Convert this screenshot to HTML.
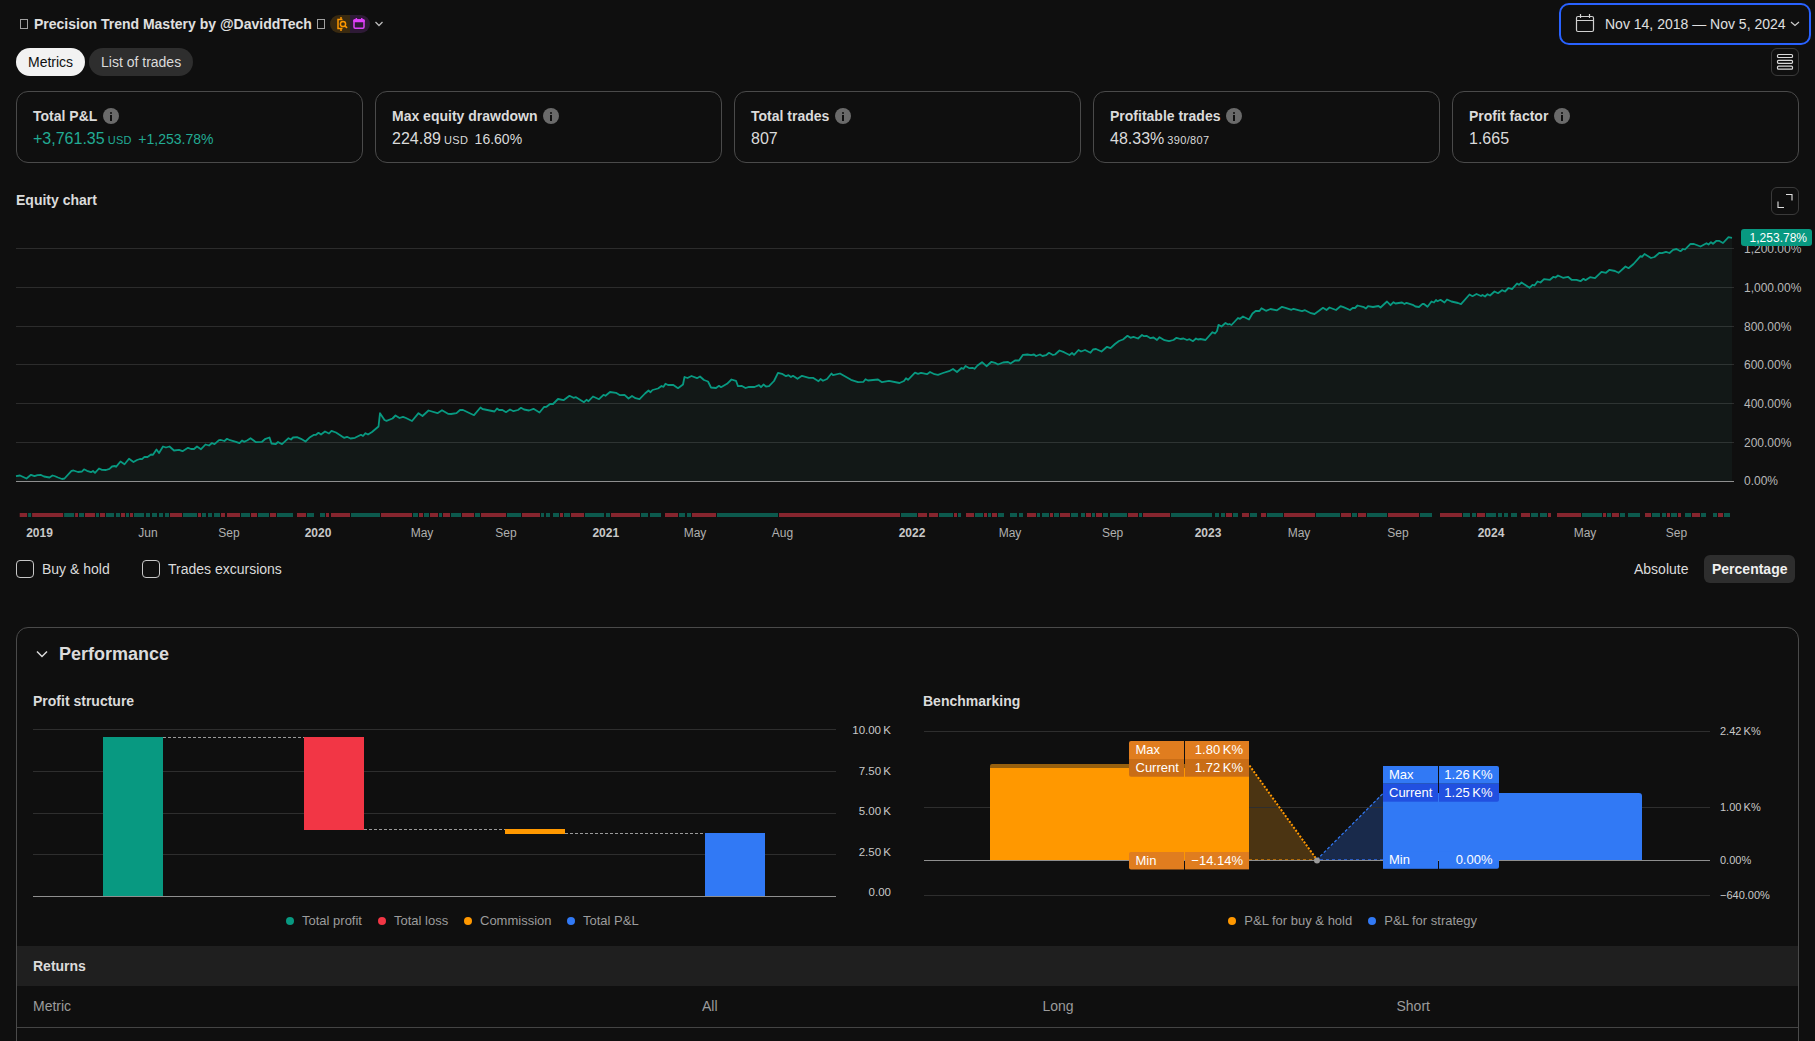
<!DOCTYPE html>
<html><head><meta charset="utf-8">
<style>
*{box-sizing:border-box;margin:0;padding:0}
html,body{width:1815px;height:1041px;overflow:hidden;background:#0f0f0f;font-family:"Liberation Sans",sans-serif;color:#dbdbdb}
.a{position:absolute;white-space:nowrap}
.b{font-weight:bold}
.card{position:absolute;top:91px;width:347px;height:72px;border:1px solid #4a4a4a;border-radius:12px}
.card .t{position:absolute;left:16px;top:15px;font-size:14px;font-weight:bold;line-height:18px}
.card .v{position:absolute;left:16px;top:37px;font-size:16px;line-height:20px}
.info{display:inline-block;width:16px;height:16px;border-radius:50%;background:#6a6a6a;vertical-align:-3px;margin-left:6px;position:relative}
.info:before{content:"";position:absolute;left:7px;top:3.5px;width:2px;height:2px;background:#0f0f0f;border-radius:1px}
.info:after{content:"";position:absolute;left:7px;top:6.5px;width:2px;height:6px;background:#0f0f0f}
.usd{font-size:11px;margin-left:3px;letter-spacing:0.35px}
.pct{font-size:14px;margin-left:6.4px}
.small{font-size:11px;margin-left:3px;letter-spacing:0.35px}
.pill{position:absolute;top:48px;height:28px;border-radius:14px;font-size:14px;line-height:28px;padding:0 12px}
.cb{position:absolute;width:18px;height:18px;border:1.5px solid #c8c8c8;border-radius:4px;top:560px}
.lg{font-size:13px;fill:#9c9c9c}
</style></head><body>
<div class="a" style="left:0;top:0;width:1815px;height:1041px">

<!-- header -->
<div class="a" style="left:20px;top:19px;width:8px;height:10px;border:1px solid #a0a0a0"></div>
<div class="a b" id="title" style="left:34px;top:15px;font-size:14px;line-height:18px;color:#e0e0e0">Precision Trend Mastery by @DaviddTech</div>
<div class="a" style="left:317px;top:19px;width:8px;height:10px;border:1px solid #a0a0a0"></div>
<div class="a" style="left:330px;top:15px;width:40px;height:18px;border-radius:9px;overflow:hidden">
  <div class="a" style="left:0;top:0;width:20px;height:18px;background:#3a2a10"></div>
  <div class="a" style="left:20px;top:0;width:20px;height:18px;background:#2e1a36"></div>
  <svg class="a" style="left:0;top:0" width="40" height="18" viewBox="0 0 40 18">
    <path d="M11 2v2.5M11 13.5v2.5" stroke="#ff9800" stroke-width="1.5"/>
    <path d="M12.5 4.5H8v9h4.5" stroke="#ff9800" stroke-width="1.5" fill="none"/>
    <circle cx="13" cy="9" r="2.6" stroke="#ff9800" stroke-width="1.5" fill="#3a2a10"/>
    <path d="M14.9 10.9l2.2 2" stroke="#ff9800" stroke-width="1.5"/>
    <rect x="24" y="5" width="10" height="8.2" rx="1.2" stroke="#e040fb" stroke-width="1.5" fill="none"/>
    <rect x="23.3" y="4.3" width="11.4" height="3" rx="1" fill="#e040fb"/>
    <rect x="25.6" y="3" width="1.5" height="2" fill="#e040fb"/><rect x="31" y="3" width="1.5" height="2" fill="#e040fb"/>
  </svg>
</div>
<svg class="a" style="left:374px;top:20px" width="10" height="8" viewBox="0 0 10 8"><path d="M1.5 2l3.5 3.5L8.5 2" stroke="#bbb" stroke-width="1.3" fill="none"/></svg>

<!-- date range -->
<div class="a" style="left:1559px;top:3px;width:252px;height:42px;border:2px solid #2962ff;border-radius:10px"></div>
<svg class="a" style="left:1575px;top:13px" width="20" height="20" viewBox="0 0 20 20">
  <rect x="1.5" y="3.5" width="17" height="15" rx="1.5" stroke="#d0d0d0" stroke-width="1.2" fill="none"/>
  <path d="M1.5 7.5h17M5.5 1v4M14.5 1v4" stroke="#d0d0d0" stroke-width="1.2"/>
</svg>
<div class="a" id="date" style="left:1605px;top:15px;font-size:14px;line-height:18px;color:#e0e0e0">Nov 14, 2018 — Nov 5, 2024</div>
<svg class="a" style="left:1789px;top:19px" width="12" height="10" viewBox="0 0 12 10"><path d="M2 3l4 3.5L10 3" stroke="#ccc" stroke-width="1.2" fill="none"/></svg>

<!-- tabs -->
<div class="pill" id="tab1" style="left:16px;background:#f2f2f2;color:#0f0f0f">Metrics</div>
<div class="pill" id="tab2" style="left:89px;background:#2e2e2e;color:#dbdbdb">List of trades</div>

<!-- menu btn -->
<div class="a" style="left:1771px;top:48px;width:28px;height:28px;border:1px solid #3a3a3a;border-radius:6px"></div>
<svg class="a" style="left:1771px;top:48px" width="28" height="28" viewBox="0 0 28 28">
  <rect x="6.5" y="6.5" width="15" height="3" rx="1" stroke="#d8d8d8" stroke-width="1.2" fill="none"/>
  <rect x="6.5" y="12.3" width="15" height="3" rx="1" stroke="#d8d8d8" stroke-width="1.2" fill="none"/>
  <rect x="6.5" y="18.2" width="15" height="3" rx="1" stroke="#d8d8d8" stroke-width="1.2" fill="none"/>
</svg>

<!-- cards -->
<div class="card" style="left:16px"><div class="t">Total P&amp;L<span class="info"></span></div>
 <div class="v" style="color:#22ab94">+3,761.35<span class="usd">USD</span><span class="pct">+1,253.78%</span></div></div>
<div class="card" style="left:375px"><div class="t">Max equity drawdown<span class="info"></span></div>
 <div class="v">224.89<span class="usd">USD</span><span class="pct">16.60%</span></div></div>
<div class="card" style="left:734px"><div class="t">Total trades<span class="info"></span></div>
 <div class="v">807</div></div>
<div class="card" style="left:1093px"><div class="t">Profitable trades<span class="info"></span></div>
 <div class="v">48.33%<span class="small">390/807</span></div></div>
<div class="card" style="left:1452px"><div class="t">Profit factor<span class="info"></span></div>
 <div class="v">1.665</div></div>

<!-- equity chart -->
<div class="a b" style="left:16px;top:191px;font-size:14px;line-height:18px">Equity chart</div>
<div class="a" style="left:1771px;top:187px;width:28px;height:28px;border:1px solid #3a3a3a;border-radius:6px"></div>
<svg class="a" style="left:1771px;top:187px" width="28" height="28" viewBox="0 0 28 28">
  <path d="M15 7.5h6v6M13 20.5H7v-6" stroke="#e0e0e0" stroke-width="1.1" fill="none"/>
</svg>

<svg class="a" style="left:0;top:0" width="1815" height="560" viewBox="0 0 1815 560">
  <path d="M16 476.2 L20 475.5 L26.5 478.5 L31 474.8 L34.5 476.2 L37.5 475.2 L41 475 L44 476.5 L49.5 477.5 L52.5 475.5 L54.5 476 L58 477.5 L62 479 L64.5 478.5 L71.5 470.8 L73.5 470.5 L78 472 L82 471.5 L84 469.3 L87 470.8 L91 472.2 L93 471 L95 472.8 L99 468.5 L102 469.8 L106 470 L109.5 468.8 L112 466.5 L115 466 L116 466.8 L120.5 461.5 L124.5 464.2 L129 458.7 L133.5 462 L137 460 L140 459 L142 459.2 L144.5 456.8 L147.5 457 L151 454.5 L153 454.8 L156.5 449.5 L159 453 L163 446.5 L166 447.5 L169.5 446.5 L174 450.5 L179 449.8 L182.5 451.2 L188 447.8 L191 449 L194 449 L197 446.5 L201 449.2 L205.5 444.5 L209 445.5 L212 443 L214.5 444.2 L219 440.2 L221 440 L224.5 441 L227 438.8 L230 440.2 L236 441.8 L239.5 443.2 L242 440.5 L244 441.8 L247 440.5 L250.5 438.2 L256 442.2 L262 441.8 L265.5 438.8 L269.5 437.5 L271.5 443.5 L275.5 444.2 L278 442 L282 444.2 L288.5 438.2 L291 439.5 L293 437.5 L297 437.2 L301 438.8 L305.5 441.5 L310 437.2 L314 434.8 L316 434.8 L318.5 432.8 L321 434.5 L325 431.5 L329 433.5 L331.5 430.8 L336 432.5 L344 437.8 L347 436.8 L350.5 438.5 L355 437.8 L361 434.8 L363 436 L365.5 433.2 L368 434.5 L372 432 L378.5 426.5 L380 413.2 L384.5 420 L386.5 420.8 L392.5 418.5 L395.5 415.5 L399.5 418 L403 416.8 L406 418 L412 421 L418.5 413.2 L422.5 416 L428.5 410.5 L437.5 413.2 L442 410.2 L448 413.8 L451 414 L456.5 413.2 L460 410 L463 410 L474 415.2 L480.5 407.5 L482.5 409 L494.5 411.5 L497 408.5 L499 410 L502 409.8 L506 412.2 L510 409.5 L513.5 411.2 L518 410 L521 407.8 L524 409.5 L529 410.5 L533.5 408.8 L539.5 412.5 L544 407 L546.5 406.8 L550 404 L553 404 L558 399 L563.5 400.2 L569.5 395.8 L573.5 397.8 L576 397.2 L584 402.2 L586.5 399.8 L588.5 401.2 L593 396.5 L599 399.2 L603.5 394.8 L605.5 395.8 L610 392 L616 392.8 L620 395.2 L624.5 394.8 L628.5 398.5 L632 396 L635.5 398.2 L639.5 399.2 L645 393.5 L648.5 390.5 L650.5 392.2 L652.5 390 L658 388.5 L661.5 386 L663.5 386.8 L665.5 383.8 L668 385 L673 384.8 L678 388.2 L683 384.5 L684.5 377 L687.5 378 L691.5 376 L697 378.2 L700 376.5 L704 380 L708 381.5 L711 387.5 L716 388 L719 385.8 L721 387.2 L727 383.8 L731.5 379.5 L736 380.8 L738 386.2 L741.5 385.8 L745.5 388 L749 386.8 L754.5 387 L759 385.2 L761 387.2 L763.5 384.5 L766 386.5 L769 386.2 L774 381 L778 372.8 L782 373.8 L786 376.2 L788.5 375.2 L791 377 L793 375.8 L797.5 378.8 L802 375.8 L809 377.8 L813 377.8 L818.5 381.2 L820.5 379 L823 380.8 L827 379 L831.5 373.5 L833 375.2 L840 373.5 L851 379.8 L858 382.2 L863.5 381.8 L865.5 379.2 L868 380.5 L878 379.5 L882 382.2 L889 380.8 L899.5 383 L904 381 L906 378.2 L908 379.8 L915 372.7 L918 373.8 L921 372.8 L927 374.2 L930 372 L934.5 374.2 L938 374.8 L943 373 L949 371.2 L953 369 L957 372 L961.5 368 L963.5 368.8 L965.5 366 L969.5 368.2 L972.5 367.8 L974.5 368.8 L977.5 365.5 L982 362.2 L986.5 366.2 L991.5 361.8 L995 362.8 L998 364.5 L1003 362.5 L1008 362 L1010.5 363.5 L1015 360.5 L1019 360.5 L1023 354.8 L1027.5 354.5 L1031 355.2 L1034 354.5 L1036 356 L1040 354.5 L1042.5 356 L1046 355.2 L1049 352.8 L1053 355 L1055 354.5 L1059.5 350.5 L1064 352.2 L1069.5 355 L1072 353 L1074 354.8 L1078.5 350 L1081 351.5 L1085 350 L1090.5 352.8 L1093 349.5 L1096 349 L1101.5 351.5 L1107 346.8 L1110.5 348.2 L1115 344 L1119 341 L1123 339.5 L1127.5 335.8 L1130.5 337.8 L1133.5 336.8 L1138 338.5 L1142 335 L1144 336.2 L1146.5 335.8 L1150.5 338.2 L1153.5 337.5 L1157 340 L1159.5 337.2 L1164.5 340.2 L1169 341.2 L1173.5 340 L1176.5 337.8 L1180.5 339 L1183.5 338.5 L1187 340 L1189.5 339.2 L1193 341.2 L1196 338.5 L1198 339.5 L1200.5 339 L1205.5 340 L1212.5 332.2 L1215 333.5 L1217 331 L1218.5 324.8 L1221.5 326.5 L1225.5 323 L1228 324.5 L1229.5 324 L1231.5 325 L1238 318 L1240 318.8 L1243 316.5 L1249 319.5 L1252.5 313.5 L1256 310.8 L1259.5 311 L1261.5 308.2 L1266 310.8 L1270.5 309 L1277 310.3 L1282 306.8 L1285.5 307.8 L1291.5 309.8 L1293.5 308.8 L1302 311.2 L1305 310.2 L1311 313.2 L1314.5 314 L1319 310.8 L1323 307.8 L1326.5 310 L1329.5 307.5 L1336 310 L1340.5 306.2 L1343.5 307.2 L1350 310 L1353 307.8 L1355 308 L1357.5 305.5 L1364 307.2 L1366 308.5 L1368 306.2 L1373 307 L1378.5 306 L1380.5 307.5 L1387 301.5 L1390.5 305.2 L1393.5 302.2 L1395.5 303.5 L1402 302.5 L1404.5 304 L1406.5 302.8 L1413.5 305.2 L1415.5 306.5 L1419 307 L1422.5 303.8 L1424 304 L1427.5 306.8 L1431.5 301.5 L1434 302.5 L1436 300 L1437.5 301.2 L1440.5 299.8 L1444.5 302.5 L1447 299.5 L1451.5 301.5 L1458 303 L1461 304.2 L1469.5 294.5 L1472.5 296.2 L1476.5 294 L1481 296 L1482.5 295 L1485 296.5 L1487.5 294.2 L1490 295.5 L1494.5 291.5 L1498 293.2 L1502 290.2 L1505 291.5 L1508.5 288 L1512 289.2 L1517 283.5 L1519 284.8 L1521.5 282.5 L1529.5 287.8 L1532.5 284.8 L1534.5 285.5 L1537.5 281.5 L1540.5 282.5 L1544 279.2 L1550 279.8 L1553.5 276.8 L1555.5 277.5 L1558 275.5 L1563 277.8 L1568 276.8 L1571.5 279.8 L1576.5 279.8 L1580.5 281.2 L1583.5 278.8 L1585.5 280.2 L1590 277.2 L1595 278.2 L1601.5 271.8 L1606 272.8 L1609.5 269.8 L1615 271 L1618.5 272.8 L1625.5 266.5 L1628.5 268.2 L1633.5 264 L1640.5 256.2 L1642 256.8 L1644.5 254 L1651 258 L1654.5 257 L1659.5 252.8 L1662 253.2 L1666 251.8 L1669.5 253 L1673 249.8 L1676.5 249 L1680.5 251.2 L1683 249 L1685 249.5 L1690.5 243.8 L1694 244 L1700.5 246.5 L1706.5 243.2 L1708.5 244.5 L1711 242.2 L1713 243.8 L1716.5 240.8 L1719 240.8 L1723 243 L1728.5 237.2 L1732 237.8 L1732 481 L16 481 Z" fill="#121817"/>
  <rect x="16" y="442" width="1718" height="1" fill="rgba(255,255,255,0.12)"/><rect x="16" y="403" width="1718" height="1" fill="rgba(255,255,255,0.12)"/><rect x="16" y="364" width="1718" height="1" fill="rgba(255,255,255,0.12)"/><rect x="16" y="326" width="1718" height="1" fill="rgba(255,255,255,0.12)"/><rect x="16" y="287" width="1718" height="1" fill="rgba(255,255,255,0.12)"/><rect x="16" y="248" width="1718" height="1" fill="rgba(255,255,255,0.12)"/>
  <rect x="16" y="481" width="1718" height="1" fill="#8f8f8f"/>
  <path d="M16 476.2 L20 475.5 L26.5 478.5 L31 474.8 L34.5 476.2 L37.5 475.2 L41 475 L44 476.5 L49.5 477.5 L52.5 475.5 L54.5 476 L58 477.5 L62 479 L64.5 478.5 L71.5 470.8 L73.5 470.5 L78 472 L82 471.5 L84 469.3 L87 470.8 L91 472.2 L93 471 L95 472.8 L99 468.5 L102 469.8 L106 470 L109.5 468.8 L112 466.5 L115 466 L116 466.8 L120.5 461.5 L124.5 464.2 L129 458.7 L133.5 462 L137 460 L140 459 L142 459.2 L144.5 456.8 L147.5 457 L151 454.5 L153 454.8 L156.5 449.5 L159 453 L163 446.5 L166 447.5 L169.5 446.5 L174 450.5 L179 449.8 L182.5 451.2 L188 447.8 L191 449 L194 449 L197 446.5 L201 449.2 L205.5 444.5 L209 445.5 L212 443 L214.5 444.2 L219 440.2 L221 440 L224.5 441 L227 438.8 L230 440.2 L236 441.8 L239.5 443.2 L242 440.5 L244 441.8 L247 440.5 L250.5 438.2 L256 442.2 L262 441.8 L265.5 438.8 L269.5 437.5 L271.5 443.5 L275.5 444.2 L278 442 L282 444.2 L288.5 438.2 L291 439.5 L293 437.5 L297 437.2 L301 438.8 L305.5 441.5 L310 437.2 L314 434.8 L316 434.8 L318.5 432.8 L321 434.5 L325 431.5 L329 433.5 L331.5 430.8 L336 432.5 L344 437.8 L347 436.8 L350.5 438.5 L355 437.8 L361 434.8 L363 436 L365.5 433.2 L368 434.5 L372 432 L378.5 426.5 L380 413.2 L384.5 420 L386.5 420.8 L392.5 418.5 L395.5 415.5 L399.5 418 L403 416.8 L406 418 L412 421 L418.5 413.2 L422.5 416 L428.5 410.5 L437.5 413.2 L442 410.2 L448 413.8 L451 414 L456.5 413.2 L460 410 L463 410 L474 415.2 L480.5 407.5 L482.5 409 L494.5 411.5 L497 408.5 L499 410 L502 409.8 L506 412.2 L510 409.5 L513.5 411.2 L518 410 L521 407.8 L524 409.5 L529 410.5 L533.5 408.8 L539.5 412.5 L544 407 L546.5 406.8 L550 404 L553 404 L558 399 L563.5 400.2 L569.5 395.8 L573.5 397.8 L576 397.2 L584 402.2 L586.5 399.8 L588.5 401.2 L593 396.5 L599 399.2 L603.5 394.8 L605.5 395.8 L610 392 L616 392.8 L620 395.2 L624.5 394.8 L628.5 398.5 L632 396 L635.5 398.2 L639.5 399.2 L645 393.5 L648.5 390.5 L650.5 392.2 L652.5 390 L658 388.5 L661.5 386 L663.5 386.8 L665.5 383.8 L668 385 L673 384.8 L678 388.2 L683 384.5 L684.5 377 L687.5 378 L691.5 376 L697 378.2 L700 376.5 L704 380 L708 381.5 L711 387.5 L716 388 L719 385.8 L721 387.2 L727 383.8 L731.5 379.5 L736 380.8 L738 386.2 L741.5 385.8 L745.5 388 L749 386.8 L754.5 387 L759 385.2 L761 387.2 L763.5 384.5 L766 386.5 L769 386.2 L774 381 L778 372.8 L782 373.8 L786 376.2 L788.5 375.2 L791 377 L793 375.8 L797.5 378.8 L802 375.8 L809 377.8 L813 377.8 L818.5 381.2 L820.5 379 L823 380.8 L827 379 L831.5 373.5 L833 375.2 L840 373.5 L851 379.8 L858 382.2 L863.5 381.8 L865.5 379.2 L868 380.5 L878 379.5 L882 382.2 L889 380.8 L899.5 383 L904 381 L906 378.2 L908 379.8 L915 372.7 L918 373.8 L921 372.8 L927 374.2 L930 372 L934.5 374.2 L938 374.8 L943 373 L949 371.2 L953 369 L957 372 L961.5 368 L963.5 368.8 L965.5 366 L969.5 368.2 L972.5 367.8 L974.5 368.8 L977.5 365.5 L982 362.2 L986.5 366.2 L991.5 361.8 L995 362.8 L998 364.5 L1003 362.5 L1008 362 L1010.5 363.5 L1015 360.5 L1019 360.5 L1023 354.8 L1027.5 354.5 L1031 355.2 L1034 354.5 L1036 356 L1040 354.5 L1042.5 356 L1046 355.2 L1049 352.8 L1053 355 L1055 354.5 L1059.5 350.5 L1064 352.2 L1069.5 355 L1072 353 L1074 354.8 L1078.5 350 L1081 351.5 L1085 350 L1090.5 352.8 L1093 349.5 L1096 349 L1101.5 351.5 L1107 346.8 L1110.5 348.2 L1115 344 L1119 341 L1123 339.5 L1127.5 335.8 L1130.5 337.8 L1133.5 336.8 L1138 338.5 L1142 335 L1144 336.2 L1146.5 335.8 L1150.5 338.2 L1153.5 337.5 L1157 340 L1159.5 337.2 L1164.5 340.2 L1169 341.2 L1173.5 340 L1176.5 337.8 L1180.5 339 L1183.5 338.5 L1187 340 L1189.5 339.2 L1193 341.2 L1196 338.5 L1198 339.5 L1200.5 339 L1205.5 340 L1212.5 332.2 L1215 333.5 L1217 331 L1218.5 324.8 L1221.5 326.5 L1225.5 323 L1228 324.5 L1229.5 324 L1231.5 325 L1238 318 L1240 318.8 L1243 316.5 L1249 319.5 L1252.5 313.5 L1256 310.8 L1259.5 311 L1261.5 308.2 L1266 310.8 L1270.5 309 L1277 310.3 L1282 306.8 L1285.5 307.8 L1291.5 309.8 L1293.5 308.8 L1302 311.2 L1305 310.2 L1311 313.2 L1314.5 314 L1319 310.8 L1323 307.8 L1326.5 310 L1329.5 307.5 L1336 310 L1340.5 306.2 L1343.5 307.2 L1350 310 L1353 307.8 L1355 308 L1357.5 305.5 L1364 307.2 L1366 308.5 L1368 306.2 L1373 307 L1378.5 306 L1380.5 307.5 L1387 301.5 L1390.5 305.2 L1393.5 302.2 L1395.5 303.5 L1402 302.5 L1404.5 304 L1406.5 302.8 L1413.5 305.2 L1415.5 306.5 L1419 307 L1422.5 303.8 L1424 304 L1427.5 306.8 L1431.5 301.5 L1434 302.5 L1436 300 L1437.5 301.2 L1440.5 299.8 L1444.5 302.5 L1447 299.5 L1451.5 301.5 L1458 303 L1461 304.2 L1469.5 294.5 L1472.5 296.2 L1476.5 294 L1481 296 L1482.5 295 L1485 296.5 L1487.5 294.2 L1490 295.5 L1494.5 291.5 L1498 293.2 L1502 290.2 L1505 291.5 L1508.5 288 L1512 289.2 L1517 283.5 L1519 284.8 L1521.5 282.5 L1529.5 287.8 L1532.5 284.8 L1534.5 285.5 L1537.5 281.5 L1540.5 282.5 L1544 279.2 L1550 279.8 L1553.5 276.8 L1555.5 277.5 L1558 275.5 L1563 277.8 L1568 276.8 L1571.5 279.8 L1576.5 279.8 L1580.5 281.2 L1583.5 278.8 L1585.5 280.2 L1590 277.2 L1595 278.2 L1601.5 271.8 L1606 272.8 L1609.5 269.8 L1615 271 L1618.5 272.8 L1625.5 266.5 L1628.5 268.2 L1633.5 264 L1640.5 256.2 L1642 256.8 L1644.5 254 L1651 258 L1654.5 257 L1659.5 252.8 L1662 253.2 L1666 251.8 L1669.5 253 L1673 249.8 L1676.5 249 L1680.5 251.2 L1683 249 L1685 249.5 L1690.5 243.8 L1694 244 L1700.5 246.5 L1706.5 243.2 L1708.5 244.5 L1711 242.2 L1713 243.8 L1716.5 240.8 L1719 240.8 L1723 243 L1728.5 237.2 L1732 237.8" stroke="#089981" stroke-width="1.8" fill="none" stroke-linejoin="round"/>
  <g font-size="12" fill="#b8b8b8" font-family="Liberation Sans"><text x="1744" y="447">200.00%</text><text x="1744" y="408">400.00%</text><text x="1744" y="369">600.00%</text><text x="1744" y="331">800.00%</text><text x="1744" y="292">1,000.00%</text><text x="1744" y="253">1,200.00%</text><text x="1744" y="485">0.00%</text></g>
  <rect x="1741" y="229" width="71" height="17" rx="3" fill="#089981"/>
  <text x="1807" y="242" text-anchor="end" font-size="12" fill="#fff" font-family="Liberation Sans">1,253.78%</text>
  <rect x="19.7" y="513" width="7.4" height="4" fill="#86252e"/><rect x="28.1" y="513" width="3" height="4" fill="#0c594d"/><rect x="32.1" y="513" width="31" height="4" fill="#86252e"/><rect x="64.1" y="513" width="10" height="4" fill="#0c594d"/><rect x="75.1" y="513" width="2.9" height="4" fill="#86252e"/><rect x="79" y="513" width="5" height="4" fill="#0c594d"/><rect x="85" y="513" width="10" height="4" fill="#86252e"/><rect x="96" y="513" width="3" height="4" fill="#0c594d"/><rect x="100" y="513" width="5" height="4" fill="#86252e"/><rect x="106" y="513" width="8" height="4" fill="#0c594d"/><rect x="116" y="513" width="4" height="4" fill="#0c594d"/><rect x="121" y="513" width="4" height="4" fill="#86252e"/><rect x="126" y="513" width="3" height="4" fill="#0c594d"/><rect x="130" y="513" width="3" height="4" fill="#86252e"/><rect x="134" y="513" width="10" height="4" fill="#0c594d"/><rect x="146" y="513" width="4" height="4" fill="#0c594d"/><rect x="152" y="513" width="5" height="4" fill="#0c594d"/><rect x="159" y="513" width="4" height="4" fill="#0c594d"/><rect x="165" y="513" width="4" height="4" fill="#0c594d"/><rect x="170" y="513" width="12" height="4" fill="#86252e"/><rect x="183" y="513" width="14" height="4" fill="#0c594d"/><rect x="198" y="513" width="3" height="4" fill="#86252e"/><rect x="202" y="513" width="4" height="4" fill="#0c594d"/><rect x="208" y="513" width="4" height="4" fill="#0c594d"/><rect x="214" y="513" width="6" height="4" fill="#0c594d"/><rect x="221" y="513" width="4" height="4" fill="#86252e"/><rect x="227" y="513" width="13" height="4" fill="#86252e"/><rect x="241" y="513" width="9" height="4" fill="#0c594d"/><rect x="251" y="513" width="6" height="4" fill="#86252e"/><rect x="258" y="513" width="11" height="4" fill="#0c594d"/><rect x="270" y="513" width="6" height="4" fill="#86252e"/><rect x="277" y="513" width="16" height="4" fill="#0c594d"/><rect x="297" y="513" width="9" height="4" fill="#86252e"/><rect x="307" y="513" width="7" height="4" fill="#0c594d"/><rect x="320" y="513" width="5" height="4" fill="#0c594d"/><rect x="326" y="513" width="3" height="4" fill="#86252e"/><rect x="331" y="513" width="19" height="4" fill="#86252e"/><rect x="351" y="513" width="29" height="4" fill="#0c594d"/><rect x="381" y="513" width="31" height="4" fill="#86252e"/><rect x="413" y="513" width="5" height="4" fill="#0c594d"/><rect x="419" y="513" width="4" height="4" fill="#86252e"/><rect x="424" y="513" width="5" height="4" fill="#0c594d"/><rect x="430" y="513" width="8" height="4" fill="#86252e"/><rect x="439" y="513" width="3" height="4" fill="#0c594d"/><rect x="443" y="513" width="7" height="4" fill="#86252e"/><rect x="451" y="513" width="10" height="4" fill="#0c594d"/><rect x="462" y="513" width="12" height="4" fill="#86252e"/><rect x="475" y="513" width="5" height="4" fill="#0c594d"/><rect x="481" y="513" width="25" height="4" fill="#86252e"/><rect x="507" y="513" width="14" height="4" fill="#0c594d"/><rect x="522" y="513" width="18" height="4" fill="#86252e"/><rect x="541" y="513" width="3" height="4" fill="#0c594d"/><rect x="546" y="513" width="4" height="4" fill="#0c594d"/><rect x="553" y="513" width="6" height="4" fill="#0c594d"/><rect x="560" y="513" width="3" height="4" fill="#86252e"/><rect x="564" y="513" width="6" height="4" fill="#0c594d"/><rect x="571" y="513" width="13" height="4" fill="#86252e"/><rect x="585" y="513" width="19" height="4" fill="#0c594d"/><rect x="606" y="513" width="4" height="4" fill="#0c594d"/><rect x="611" y="513" width="29" height="4" fill="#86252e"/><rect x="641" y="513" width="7" height="4" fill="#0c594d"/><rect x="650" y="513" width="11" height="4" fill="#0c594d"/><rect x="665" y="513" width="13" height="4" fill="#86252e"/><rect x="679" y="513" width="6" height="4" fill="#0c594d"/><rect x="687" y="513" width="4" height="4" fill="#0c594d"/><rect x="692" y="513" width="24" height="4" fill="#86252e"/><rect x="717" y="513" width="61" height="4" fill="#0c594d"/><rect x="779" y="513" width="121" height="4" fill="#86252e"/><rect x="901" y="513" width="16" height="4" fill="#0c594d"/><rect x="918" y="513" width="9" height="4" fill="#86252e"/><rect x="929" y="513" width="9" height="4" fill="#86252e"/><rect x="939" y="513" width="14" height="4" fill="#0c594d"/><rect x="954" y="513" width="3" height="4" fill="#86252e"/><rect x="958" y="513" width="3" height="4" fill="#0c594d"/><rect x="966" y="513" width="8" height="4" fill="#86252e"/><rect x="975" y="513" width="8" height="4" fill="#0c594d"/><rect x="984" y="513" width="3" height="4" fill="#86252e"/><rect x="988" y="513" width="3" height="4" fill="#0c594d"/><rect x="992" y="513" width="5" height="4" fill="#86252e"/><rect x="998" y="513" width="6" height="4" fill="#0c594d"/><rect x="1010" y="513" width="7" height="4" fill="#0c594d"/><rect x="1019" y="513" width="4" height="4" fill="#0c594d"/><rect x="1027" y="513" width="9" height="4" fill="#86252e"/><rect x="1037" y="513" width="3" height="4" fill="#0c594d"/><rect x="1042" y="513" width="7" height="4" fill="#0c594d"/><rect x="1050" y="513" width="3" height="4" fill="#86252e"/><rect x="1054" y="513" width="5" height="4" fill="#0c594d"/><rect x="1060" y="513" width="10" height="4" fill="#86252e"/><rect x="1071" y="513" width="7" height="4" fill="#0c594d"/><rect x="1081" y="513" width="4" height="4" fill="#0c594d"/><rect x="1086" y="513" width="5" height="4" fill="#86252e"/><rect x="1092" y="513" width="3" height="4" fill="#0c594d"/><rect x="1096" y="513" width="6" height="4" fill="#86252e"/><rect x="1103" y="513" width="5" height="4" fill="#0c594d"/><rect x="1110" y="513" width="17" height="4" fill="#0c594d"/><rect x="1128" y="513" width="10" height="4" fill="#86252e"/><rect x="1139" y="513" width="3" height="4" fill="#0c594d"/><rect x="1143" y="513" width="27" height="4" fill="#86252e"/><rect x="1171" y="513" width="41" height="4" fill="#0c594d"/><rect x="1215" y="513" width="4" height="4" fill="#0c594d"/><rect x="1221" y="513" width="4" height="4" fill="#0c594d"/><rect x="1226" y="513" width="6" height="4" fill="#86252e"/><rect x="1233" y="513" width="5" height="4" fill="#0c594d"/><rect x="1242" y="513" width="7" height="4" fill="#86252e"/><rect x="1250" y="513" width="7" height="4" fill="#0c594d"/><rect x="1261" y="513" width="5" height="4" fill="#86252e"/><rect x="1267" y="513" width="16" height="4" fill="#0c594d"/><rect x="1284" y="513" width="31" height="4" fill="#86252e"/><rect x="1316" y="513" width="24" height="4" fill="#0c594d"/><rect x="1341" y="513" width="10" height="4" fill="#86252e"/><rect x="1352" y="513" width="5" height="4" fill="#0c594d"/><rect x="1358" y="513" width="8" height="4" fill="#86252e"/><rect x="1367" y="513" width="20" height="4" fill="#0c594d"/><rect x="1388" y="513" width="31" height="4" fill="#86252e"/><rect x="1420" y="513" width="12" height="4" fill="#0c594d"/><rect x="1440" y="513" width="22" height="4" fill="#86252e"/><rect x="1463" y="513" width="7" height="4" fill="#0c594d"/><rect x="1472" y="513" width="4" height="4" fill="#0c594d"/><rect x="1477" y="513" width="8" height="4" fill="#86252e"/><rect x="1486" y="513" width="10" height="4" fill="#0c594d"/><rect x="1498" y="513" width="4" height="4" fill="#0c594d"/><rect x="1504" y="513" width="4" height="4" fill="#0c594d"/><rect x="1511" y="513" width="6" height="4" fill="#0c594d"/><rect x="1521" y="513" width="9" height="4" fill="#86252e"/><rect x="1531" y="513" width="7" height="4" fill="#0c594d"/><rect x="1540" y="513" width="7" height="4" fill="#0c594d"/><rect x="1548" y="513" width="3" height="4" fill="#86252e"/><rect x="1557" y="513" width="24" height="4" fill="#86252e"/><rect x="1582" y="513" width="20" height="4" fill="#0c594d"/><rect x="1603" y="513" width="3" height="4" fill="#86252e"/><rect x="1607" y="513" width="4" height="4" fill="#0c594d"/><rect x="1612" y="513" width="7" height="4" fill="#86252e"/><rect x="1620" y="513" width="5" height="4" fill="#0c594d"/><rect x="1628" y="513" width="12" height="4" fill="#0c594d"/><rect x="1645" y="513" width="6" height="4" fill="#86252e"/><rect x="1652" y="513" width="8" height="4" fill="#0c594d"/><rect x="1662" y="513" width="4" height="4" fill="#0c594d"/><rect x="1667" y="513" width="3" height="4" fill="#86252e"/><rect x="1671" y="513" width="6" height="4" fill="#0c594d"/><rect x="1678" y="513" width="3" height="4" fill="#86252e"/><rect x="1685" y="513" width="6" height="4" fill="#0c594d"/><rect x="1692" y="513" width="8" height="4" fill="#86252e"/><rect x="1701" y="513" width="5" height="4" fill="#0c594d"/><rect x="1713" y="513" width="4" height="4" fill="#0c594d"/><rect x="1718" y="513" width="5" height="4" fill="#86252e"/><rect x="1724" y="513" width="6" height="4" fill="#0c594d"/>
  <g font-size="12" fill="#b0b0b0" font-family="Liberation Sans"><text x="39.5" y="537" text-anchor="middle" font-weight="bold" fill="#c8c8c8">2019</text><text x="148" y="537" text-anchor="middle" >Jun</text><text x="229" y="537" text-anchor="middle" >Sep</text><text x="318" y="537" text-anchor="middle" font-weight="bold" fill="#c8c8c8">2020</text><text x="422" y="537" text-anchor="middle" >May</text><text x="506" y="537" text-anchor="middle" >Sep</text><text x="605.8" y="537" text-anchor="middle" font-weight="bold" fill="#c8c8c8">2021</text><text x="695" y="537" text-anchor="middle" >May</text><text x="782.4" y="537" text-anchor="middle" >Aug</text><text x="912" y="537" text-anchor="middle" font-weight="bold" fill="#c8c8c8">2022</text><text x="1010" y="537" text-anchor="middle" >May</text><text x="1112.6" y="537" text-anchor="middle" >Sep</text><text x="1208" y="537" text-anchor="middle" font-weight="bold" fill="#c8c8c8">2023</text><text x="1299" y="537" text-anchor="middle" >May</text><text x="1398" y="537" text-anchor="middle" >Sep</text><text x="1491" y="537" text-anchor="middle" font-weight="bold" fill="#c8c8c8">2024</text><text x="1585" y="537" text-anchor="middle" >May</text><text x="1676.5" y="537" text-anchor="middle" >Sep</text></g>
</svg>

<!-- checkboxes -->
<div class="cb" style="left:16px"></div>
<div class="a" style="left:42px;top:560px;font-size:14px;line-height:18px">Buy &amp; hold</div>
<div class="cb" style="left:142px"></div>
<div class="a" style="left:168px;top:560px;font-size:14px;line-height:18px">Trades excursions</div>
<div class="a" style="left:1634px;top:560px;font-size:14px;line-height:18px">Absolute</div>
<div class="a" style="left:1704px;top:555px;width:91px;height:28px;border-radius:6px;background:#2e2e2e"></div>
<div class="a b" style="left:1712px;top:560px;font-size:14px;line-height:18px;color:#f0f0f0">Percentage</div>

<!-- performance -->
<div class="a" style="left:16px;top:627px;width:1783px;height:500px;border:1px solid #4a4a4a;border-radius:12px"></div>
<svg class="a" style="left:35px;top:648px" width="14" height="12" viewBox="0 0 14 12"><path d="M2 3.5l5 5 5-5" stroke="#dbdbdb" stroke-width="1.5" fill="none"/></svg>
<div class="a b" style="left:59px;top:643px;font-size:18px;line-height:22px">Performance</div>
<div class="a b" style="left:33px;top:692px;font-size:14px;line-height:18px">Profit structure</div>
<div class="a b" style="left:923px;top:692px;font-size:14px;line-height:18px">Benchmarking</div>

<svg class="a" style="left:0;top:700px" width="1815" height="240" viewBox="0 700 1815 240" font-family="Liberation Sans">
  <g fill="#2e2e2e">
    <rect x="33" y="729" width="803" height="1"/><rect x="33" y="771" width="803" height="1"/>
    <rect x="33" y="813" width="803" height="1"/><rect x="33" y="854" width="803" height="1"/>
  </g>
  <rect x="103" y="737" width="60" height="159" fill="#089981"/>
  <rect x="304" y="737" width="60" height="93" fill="#f23645"/>
  <rect x="505" y="829" width="60" height="5" fill="#ff9800"/>
  <rect x="705" y="833" width="60" height="63" fill="#3179f5"/>
  <g stroke="#9a9a9a" stroke-width="1" stroke-dasharray="3 2">
    <path d="M163 737.5H304M364 829.5H505M565 833.5H705"/>
  </g>
  <rect x="33" y="896" width="803" height="1" fill="#8f8f8f"/>
  <g font-size="11.5" fill="#c8c8c8" text-anchor="end">
    <text x="891" y="734">10.00&#8201;K</text><text x="891" y="775">7.50&#8201;K</text><text x="891" y="815">5.00&#8201;K</text>
    <text x="891" y="856">2.50&#8201;K</text><text x="891" y="896">0.00</text>
  </g>
  <g class="lg">
    <circle cx="290" cy="921" r="4" fill="#089981"/><text x="302" y="925">Total profit</text>
    <circle cx="382" cy="921" r="4" fill="#f23645"/><text x="394" y="925">Total loss</text>
    <circle cx="468" cy="921" r="4" fill="#ff9800"/><text x="480" y="925">Commission</text>
    <circle cx="571" cy="921" r="4" fill="#3179f5"/><text x="583" y="925">Total P&amp;L</text>
  </g>

  <!-- benchmarking -->
  <path d="M1249 765 L1317 860 L1249 860Z" fill="#4b3412"/>
  <path d="M1383 793 L1317 860 L1383 860Z" fill="#192a4b"/>
  <g fill="#2e2e2e">
    <rect x="924" y="731" width="786" height="1"/><rect x="924" y="807" width="786" height="1"/>
    <rect x="924" y="895" width="786" height="1"/>
  </g>
  <rect x="924" y="860" width="786" height="1" fill="#8f8f8f"/>
  <path d="M1249.5 765.5 L1316 858.5" stroke="#ff9800" stroke-width="2" stroke-dasharray="2 1.6"/>
  <path d="M1249 859.5 H1314" stroke="#b06a0a" stroke-width="1.2" stroke-dasharray="3 3"/>
  <path d="M1382.5 794 L1318 858.5" stroke="#3179f5" stroke-width="1.2" stroke-dasharray="3 2"/>
  <path d="M1320 859.5 H1383" stroke="#2a5bc0" stroke-width="1.2" stroke-dasharray="3 3"/>
  <rect x="990" y="764" width="259" height="8" rx="2" fill="#97600e"/>
  <rect x="990" y="768" width="259" height="92" fill="#ff9800"/>
  <rect x="1383" y="793" width="259" height="67" rx="3" fill="#3179f5"/>
  <rect x="1383" y="850" width="259" height="10" fill="#3179f5"/>
  <circle cx="1317" cy="860.5" r="3" fill="#9a9a9a"/>
  <g font-size="13" fill="#fff">
    <path d="M1131 741H1184V759H1129V743A2 2 0 0 1 1131 741Z" fill="#e07d1f"/><rect x="1185" y="741" width="64" height="18" fill="#e07d1f"/>
    <path d="M1129 759H1184V776.7H1131A2 2 0 0 1 1129 774.7Z" fill="#c96d16"/><rect x="1185" y="759" width="64" height="17.7" fill="#c96d16"/>
    <path d="M1131 852H1184V869.4H1131A2 2 0 0 1 1129 867.4V854A2 2 0 0 1 1131 852Z" fill="#e07d1f"/><rect x="1185" y="852" width="64" height="17.4" fill="#e07d1f"/>
    <text x="1135.5" y="754">Max</text><text x="1243" y="754" text-anchor="end">1.80&#8201;K%</text>
    <text x="1135.5" y="772">Current</text><text x="1243" y="772" text-anchor="end">1.72&#8201;K%</text>
    <text x="1135.5" y="865">Min</text><text x="1243" y="865" text-anchor="end">−14.14%</text>

    <rect x="1383" y="766" width="55" height="17.7" fill="#3179f5"/><path d="M1439 766H1497A2 2 0 0 1 1499 768V783.7H1439Z" fill="#3179f5"/>
    <rect x="1383" y="783.7" width="55" height="18" fill="#2150e0"/><path d="M1439 783.7H1499V799.7A2 2 0 0 1 1497 801.7H1439Z" fill="#2150e0"/>
    <rect x="1383" y="851.4" width="55" height="17.4" fill="#3179f5"/><path d="M1439 851.4H1497A2 2 0 0 1 1499 853.4V866.8A2 2 0 0 1 1497 868.8H1439Z" fill="#3179f5"/>
    <text x="1389" y="778.5">Max</text><text x="1492.5" y="778.5" text-anchor="end">1.26&#8201;K%</text>
    <text x="1389" y="796.5">Current</text><text x="1492.5" y="796.5" text-anchor="end">1.25&#8201;K%</text>
    <text x="1389" y="864">Min</text><text x="1492.5" y="864" text-anchor="end">0.00%</text>
  </g>
  <g font-size="11" fill="#c8c8c8">
    <text x="1720" y="735">2.42&#8201;K%</text><text x="1720" y="811">1.00&#8201;K%</text><text x="1720" y="864">0.00%</text><text x="1720" y="899">−640.00%</text>
  </g>
  <g class="lg">
    <circle cx="1232" cy="921" r="4" fill="#ff9800"/><text x="1244.3" y="925">P&amp;L for buy &amp; hold</text>
    <circle cx="1372" cy="921" r="4" fill="#3179f5"/><text x="1384.3" y="925">P&amp;L for strategy</text>
  </g>
</svg>

<!-- returns -->
<div class="a" style="left:17px;top:946px;width:1781px;height:40px;background:#1f1f1f"></div>
<div class="a b" style="left:33px;top:957px;font-size:14px;line-height:18px">Returns</div>
<div class="a" style="left:33px;top:997px;font-size:14px;line-height:18px;color:#9c9c9c">Metric</div>
<div class="a" style="left:702px;top:997px;font-size:14px;line-height:18px;color:#9c9c9c">All</div>
<div class="a" style="left:1042.5px;top:997px;font-size:14px;line-height:18px;color:#9c9c9c">Long</div>
<div class="a" style="left:1396.5px;top:997px;font-size:14px;line-height:18px;color:#9c9c9c">Short</div>
<div class="a" style="left:17px;top:1027px;width:1781px;height:1px;background:#444"></div>

</div>
</body></html>
